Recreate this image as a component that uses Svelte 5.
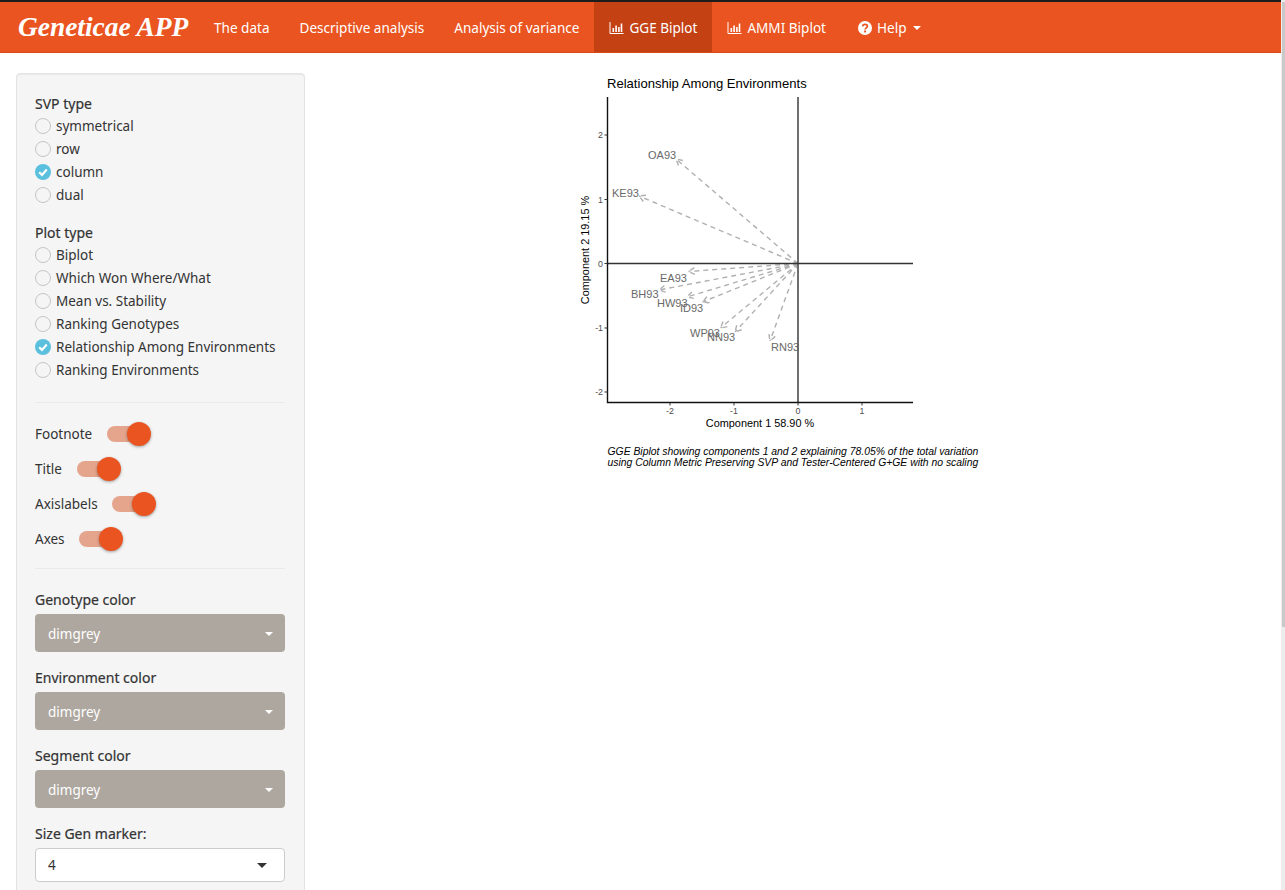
<script>
  const nav = ['The data', 'Descriptive analysis', 'Analysis of variance'];
  const svp = [['symmetrical', false], ['row', false], ['column', true], ['dual', false]];
  const plotTypes = [['Biplot', false], ['Which Won Where/What', false], ['Mean vs. Stability', false], ['Ranking Genotypes', false], ['Relationship Among Environments', true], ['Ranking Environments', false]];
  const switches = ['Footnote', 'Title', 'Axislabels', 'Axes'];
  const colors = ['Genotype color', 'Environment color', 'Segment color'];
  const ox = 798, oy = 263.5;
  const envs = [
    ['OA93', 676, 159, 648, 159],
    ['KE93', 639, 196, 612, 196.5],
    ['EA93', 688.5, 271.5, 660, 282],
    ['BH93', 659, 290, 631, 298],
    ['HW93', 687, 297, 657, 307],
    ['ID93', 702.5, 302, 680, 312],
    ['WP93', 720.5, 328, 690, 337],
    ['NN93', 735, 332, 707, 341],
    ['RN93', 770, 341, 771, 351]
  ].map(([name, x, y, lx, ly]) => {
    const a = Math.atan2(oy - y, ox - x);
    const h = (d) => `${x + 7 * Math.cos(a + d)},${y + 7 * Math.sin(a + d)}`;
    return { name, x, y, lx, ly, head: `M${h(0.5)} L${x},${y} L${h(-0.5)}` };
  });
  const xt = [[-2, 670], [-1, 734], [0, 798], [1, 862]];
  const yt = [[2, 135], [1, 199.5], [0, 263.5], [-1, 328], [-2, 392]];
</script>

{#snippet bars()}
  <svg class="bars" viewBox="0 0 14 12" aria-hidden="true">
    <path d="M.5 0v11.5H14" fill="none" stroke="currentColor" stroke-width="1" />
    <path d="M3 6h1.6v4H3zM5.8 3.5h1.6V10H5.8zM8.6 5h1.6v5H8.6zM11.2 1.5h1.6V10h-1.6z" fill="currentColor" />
  </svg>
{/snippet}

{#snippet radio(text, on)}
  <div class="radio">
    {#if on}
      <svg class="dot" viewBox="0 0 16 16" aria-hidden="true">
        <circle cx="8" cy="8" r="8" fill="#5bc0de" />
        <path d="M4.2 8.2 7 10.9 11.8 5.6" fill="none" stroke="#fff" stroke-width="2.2" />
      </svg>
    {:else}
      <span class="dot off"></span>
    {/if}
    <span>{text}</span>
  </div>
{/snippet}

<div class="page">
  <div class="main">
    <nav class="navbar">
      <span class="brand">Geneticae APP</span>
      {#each nav as n}<span class="item">{n}</span>{/each}
      <span class="item active">{@render bars()}GGE Biplot</span>
      <span class="item">{@render bars()}AMMI Biplot</span>
      <span class="item help">
        <svg class="q" viewBox="0 0 14 14" aria-hidden="true">
          <circle cx="7" cy="7" r="7" fill="#fff" />
          <path d="M4.6 5.3C4.8 3.9 5.8 3.3 7 3.3 8.4 3.3 9.4 4.1 9.4 5.3 9.4 6.8 7.1 6.9 7.1 8.5" fill="none" stroke="#e95420" stroke-width="1.7" />
          <rect x="6.1" y="9.5" width="2" height="1.9" fill="#e95420" />
        </svg>
        Help<i class="caret"></i>
      </span>
    </nav>

    <div class="content">
      <aside class="panel">
        <div class="group first">
          <div class="label">SVP type</div>
          {#each svp as [t, on]}{@render radio(t, on)}{/each}
        </div>
        <div class="group second">
          <div class="label">Plot type</div>
          {#each plotTypes as [t, on]}{@render radio(t, on)}{/each}
        </div>
        <hr class="rule-a" />
        <div class="switches">
          {#each switches as s}
            <div class="switch-row">
              <span>{s}</span>
              <span class="switch"><i class="knob"></i></span>
            </div>
          {/each}
        </div>
        <hr class="rule-b" />
        {#each colors as c}
          <div class="field">
            <div class="label">{c}</div>
            <div class="picker"><span>dimgrey</span><i class="caret"></i></div>
          </div>
        {/each}
        <div class="field">
          <div class="label">Size Gen marker:</div>
          <div class="select"><span>4</span><i class="caret dark"></i></div>
        </div>
      </aside>

      <svg class="plot" viewBox="570 73 430 410" width="430" height="410" role="img">
        <text x="607" y="88" class="title">Relationship Among Environments</text>
        {#each envs as e}
          <path d="M{ox},{oy} L{e.x},{e.y}" class="seg" />
          <path d={e.head} class="seg" />
          <text x={e.lx} y={e.ly} class="env">{e.name}</text>
        {/each}
        <path d="M798 97V402.5" class="zero v" />
        <path d="M607.5 263.5H913" class="zero" />
        <path d="M607.5 97V402.5H913" class="axis" />
        {#each xt as [v, x]}
          <path d="M{x} 402.5v3" class="tick" />
          <text x={x} y="414" class="ticktext" text-anchor="middle">{v}</text>
        {/each}
        {#each yt as [v, y]}
          <path d="M604.5 {y}h3" class="tick" />
          <text x="603" y={y + 3} class="ticktext" text-anchor="end">{v}</text>
        {/each}
        <text x="760" y="427" class="axt" text-anchor="middle">Component 1 58.90 %</text>
        <text transform="translate(589 250) rotate(-90)" class="axt" text-anchor="middle">Component 2 19.15 %</text>
        <text x="607.5" y="455" class="foot">GGE Biplot showing components 1 and 2 explaining 78.05% of the total variation</text>
        <text x="607.5" y="466" class="foot">using Column Metric Preserving SVP and Tester-Centered G+GE with no scaling</text>
      </svg>
    </div>
  </div>
  <div class="scroll"><div class="thumb"></div></div>
</div>

<style>
  :global(html), :global(body) { margin: 0; overflow: hidden; background: #fff; }
  .page {
    display: flex;
    height: 890px;
    overflow: hidden;
    font-family: "Noto Sans", "Open Sans", sans-serif;
    font-size: 13.5px;
    color: #333;
  }
  .main { flex: 1; min-width: 0; display: flex; flex-direction: column; }
  .scroll { width: 4px; background: #ededed; padding-top: 2px; }
  .thumb { margin-left: 1px; height: 625px; background: #c9c9c9; }

  .navbar {
    display: flex;
    align-items: stretch;
    height: 50px;
    border-top: 2px solid #1c1c1c;
    border-bottom: 1px solid #dd4814;
    background: #e95420;
    color: #fff;
    flex: none;
    font-size: 13.55px;
  }
  .brand {
    width: 181px;
    padding-left: 18px;
    font: italic bold 27.4px/50px "Liberation Serif", serif;
    white-space: nowrap;
  }
  .item {
    display: flex;
    align-items: center;
    padding: 1px 15px 0;
    white-space: nowrap;
  }
  .active { background: #c34113; }
  .bars { width: 15px; height: 12px; margin-right: 5px; }
  .q { width: 14px; height: 14px; margin-right: 5px; }
  .help { padding-left: 17px; }
  .caret {
    display: inline-block;
    width: 0;
    height: 0;
    margin-left: 6px;
    border-top: 4px solid currentColor;
    border-left: 4px solid transparent;
    border-right: 4px solid transparent;
  }

  .content { display: flex; flex: 1; min-height: 0; padding: 20px 0 0 16px; }
  .panel {
    width: 289px;
    height: 900px;
    flex: none;
    box-sizing: border-box;
    padding: 19px 19px 19px 18px;
    background: #f5f5f5;
    border: 1px solid #e3e3e3;
    border-radius: 4px;
    box-shadow: inset 0 1px 1px rgba(0, 0, 0, .05);
  }
  .label { font-size: 14px; font-weight: 400; line-height: 20px; color: #333; -webkit-text-stroke: .2px #333; }
  .group.first { margin-top: 1px; }
  .group.second { margin-top: 17px; }
  .radio { display: flex; align-items: center; height: 23px; gap: 5px; }
  .dot { width: 16px; height: 16px; flex: none; box-sizing: border-box; }
  .off { border: 1px solid #c5c5c5; border-radius: 50%; background: #f5f5f5; }
  hr { border: 0; border-top: 1px solid #eaeaea; margin: 0; }
  .rule-a { margin-top: 21px; }
  .switches { margin-top: 13px; }
  .switch-row { display: flex; align-items: center; height: 35px; gap: 14.6px; }
  .switch {
    position: relative;
    width: 32px;
    height: 16px;
    border-radius: 8px;
    background: #e5a48c;
  }
  .knob {
    position: absolute;
    left: 20px;
    top: -4px;
    width: 24px;
    height: 24px;
    border-radius: 50%;
    background: #e95420;
    box-shadow: 0 1px 3px rgba(0, 0, 0, .35);
  }
  .rule-b { margin-top: 12px; }
  .field { margin-top: 16px; }
  .rule-b + .field { margin-top: 21px; }
  .field .label { margin-bottom: 4px; }
  .picker, .select {
    display: flex;
    align-items: center;
    justify-content: space-between;
    box-sizing: border-box;
    padding: 0 12px 0 13px;
    border-radius: 4px;
  }
  .picker { height: 38px; background: #aea79f; color: #fff; padding-top: 1px; }
  .select {
    height: 34px;
    background: #fff;
    border: 1px solid #ccc;
    color: #333;
    padding: 0 17px 0 12px;
  }
  .select .caret { border-top-width: 5px; border-left-width: 5px; border-right-width: 5px; }

  .plot { flex: none; margin: 0 0 0 265px; display: block; }
  .plot text { font-family: "Liberation Sans", Arial, sans-serif; }
  .title { font-size: 13.07px; fill: #000; }
  .env { font-size: 11px; fill: #696969; }
  .axt { font-size: 10.9px; fill: #000; }
  .ticktext { font-size: 8.8px; fill: #4d4d4d; }
  .foot { font-size: 10.38px; font-style: italic; fill: #000; }
  .seg { fill: none; stroke: #b0b0b0; stroke-width: 1.4; stroke-dasharray: 5 4; }
  .zero { stroke: #333; stroke-width: 1.5; fill: none; }
  .zero.v { stroke: #5f5f5f; stroke-width: 1.8; }
  .axis { stroke: #111; stroke-width: 1.4; fill: none; }
  .tick { stroke: #333; stroke-width: 1; }
</style>
